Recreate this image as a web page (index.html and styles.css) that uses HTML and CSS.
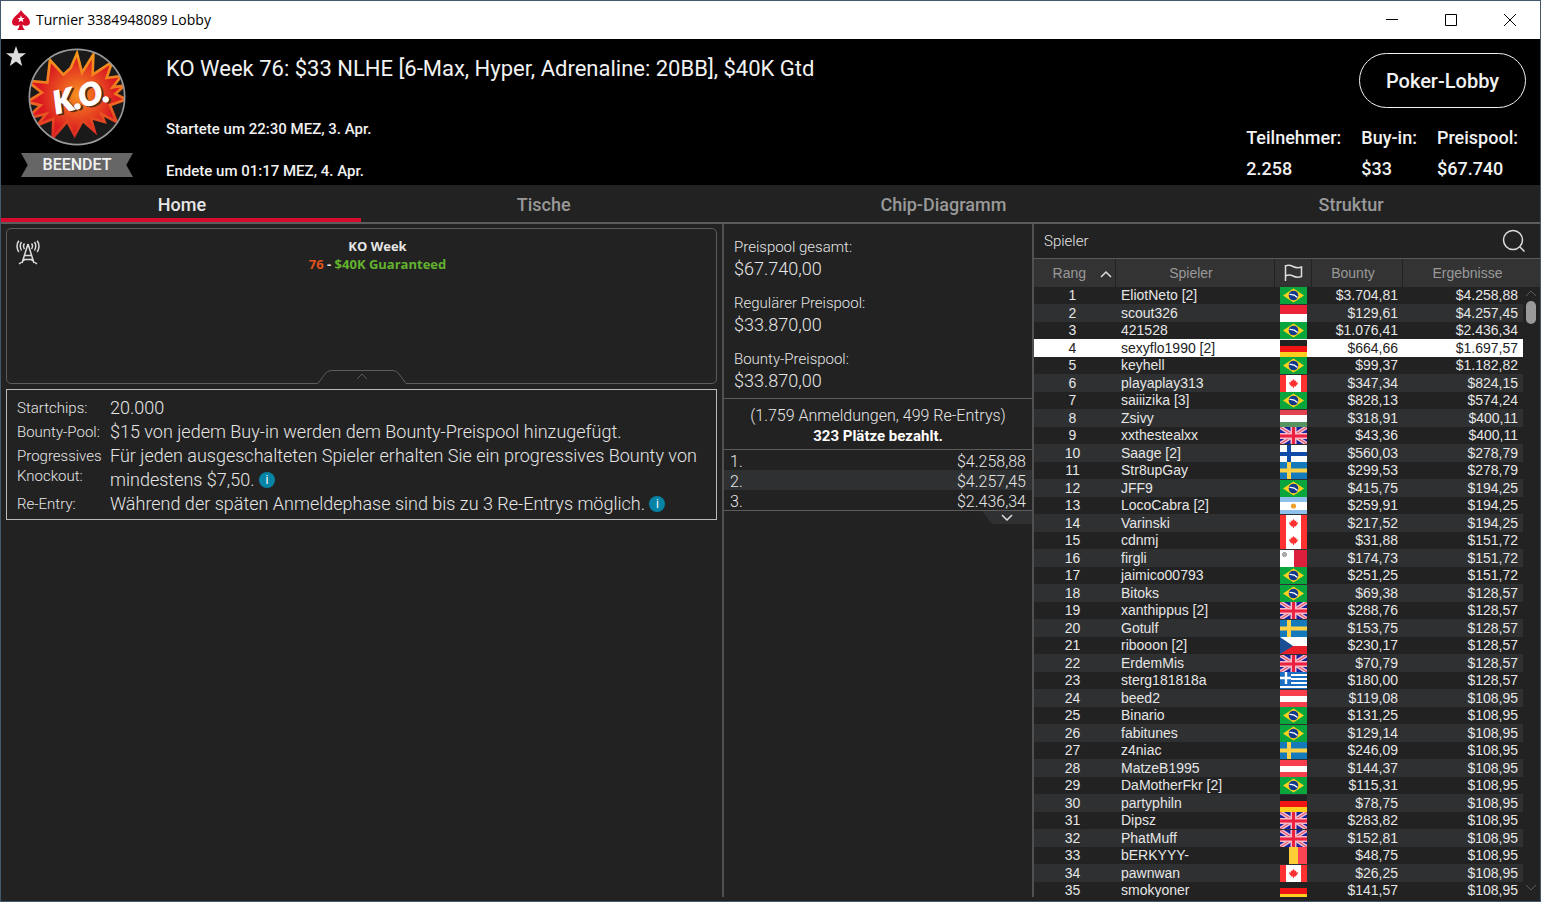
FILE: index.html
```html
<!DOCTYPE html>
<html lang="de">

<head>
  <meta charset="UTF-8">
  <meta name="viewport" content="width=device-width, initial-scale=1.0">
  <title>Turnier 3384948089 Lobby</title>
  <link rel="stylesheet" href="styles.css">
</head>

<body>
  <!-- flag sprites -->
  <svg class="sprites" aria-hidden="true">
    <symbol id="br" viewBox="0 0 27 17">
      <rect width="27" height="17" fill="#09a63d" />
      <path d="M3 8.5L13.5 1.5L24 8.5L13.5 15.500z" fill="#fbd31c" />
      <circle cx="13.5" cy="8.5" r="4.8" fill="#123a8c" />
      <path d="M9.500 7.500Q14 7 17.500 10.500" stroke="#fff" stroke-width="1.2" fill="none" />
    </symbol>
    <symbol id="id" viewBox="0 0 27 17">
      <rect width="27" height="17" fill="#fff" />
      <rect width="27" height="9" fill="#ec2237" />
    </symbol>
    <symbol id="de" viewBox="0 0 27 17">
      <rect width="27" height="17" fill="#222" />
      <rect y="6" width="27" height="6" fill="#f01414" />
      <rect y="12" width="27" height="5" fill="#ffcf1f" />
    </symbol>
    <symbol id="ca" viewBox="0 0 27 17">
      <rect width="27" height="17" fill="#ff3131" />
      <rect x="6" width="15" height="17" fill="#fff" />
      <path d="M13.500 4l1.500 2 1.300-.5-.2 2 2-.3-.7 2-1.900 2.300h-1.500v1.500h-1v-1.500h-1.500L9.600 9.200l-.7-2 2 .3-.2-2 1.300.5z" fill="#ff3131" />
    </symbol>
    <symbol id="hu" viewBox="0 0 27 17">
      <rect width="27" height="17" fill="#fff" />
      <rect width="27" height="5" fill="#e2414f" />
      <rect y="12" width="27" height="5" fill="#55935f" />
    </symbol>
    <symbol id="gb" viewBox="0 0 27 17">
      <rect width="27" height="17" fill="#1a23a0" />
      <path d="M0 0L27 17M27 0L0 17" stroke="#f3c9d4" stroke-width="4" />
      <path d="M0 0L27 17M27 0L0 17" stroke="#e8566e" stroke-width="1.2" />
      <path d="M13.500 0V17M0 9H27" stroke="#f6b9c4" stroke-width="6" />
      <path d="M13.500 0V17M0 9H27" stroke="#ea2140" stroke-width="3" />
    </symbol>
    <symbol id="fi" viewBox="0 0 27 17">
      <rect width="27" height="17" fill="#fff" />
      <path d="M9 0V17M0 9H27" stroke="#0f4aa8" stroke-width="4" />
    </symbol>
    <symbol id="se" viewBox="0 0 27 17">
      <rect width="27" height="17" fill="#147abb" />
      <path d="M9 0V17M0 8.500H27" stroke="#ffd147" stroke-width="4" />
    </symbol>
    <symbol id="ar" viewBox="0 0 27 17">
      <rect width="27" height="17" fill="#fff" />
      <rect width="27" height="5" fill="#8fbfeb" />
      <rect y="13" width="27" height="4" fill="#8fbfeb" />
      <circle cx="13.5" cy="9" r="2.6" fill="#efa02b" />
    </symbol>
    <symbol id="mt" viewBox="0 0 27 17">
      <rect width="27" height="17" fill="#fff" />
      <rect x="14" width="13" height="17" fill="#dc1f3c" />
      <path d="M2 4.500H7M4.500 2V7" stroke="#aaa" stroke-width="3" />
    </symbol>
    <symbol id="cz" viewBox="0 0 27 17">
      <rect width="27" height="17" fill="#fff" />
      <rect y="9" width="27" height="8" fill="#e8202b" />
      <path d="M0 0L13 9L0 17z" fill="#1a4f94" />
    </symbol>
    <symbol id="gr" viewBox="0 0 27 17">
      <rect width="27" height="17" fill="#1b6fc2" />
      <path d="M0 3H27M0 7H27M0 11H27M0 15H27" stroke="#fff" stroke-width="1.8" />
      <rect width="11" height="12" fill="#1b6fc2" />
      <path d="M6 0V12M0 6H11" stroke="#fff" stroke-width="2.4" />
    </symbol>
    <symbol id="at" viewBox="0 0 27 17">
      <rect width="27" height="17" fill="#fff" />
      <rect width="27" height="6" fill="#f83f4e" />
      <rect y="12" width="27" height="5" fill="#f83f4e" />
    </symbol>
    <symbol id="be" viewBox="0 0 27 17">
      <rect width="27" height="17" fill="#222" />
      <rect x="9" width="9" height="17" fill="#ffcd35" />
      <rect x="18" width="9" height="17" fill="#ff4353" />
    </symbol>
  </svg>

  <div class="window">
    <header class="titlebar">
      <svg width="18" height="20" viewBox="0 0 18 20" aria-hidden="true">
        <path d="M9 0C11 4 18 7.500 18 12.200C18 15.500 13.500 17.200 10.500 14.500C10.600 16.500 11 18 12.500 19.500V20H5.500V19.500C7 18 7.400 16.500 7.500 14.500C4.500 17.200 0 15.500 0 12.200C0 7.500 7 4 9 0z" fill="#d70a2c" />
        <path d="M9 5.200l1 2.700h2.800l-2.200 1.700.8 2.700L9 10.700l-2.400 1.600.8-2.700L5.200 7.900H8z" fill="#fff" />
      </svg>
      <h1 class="titlebar-text">Turnier 3384948089 Lobby</h1>
      <div class="window-buttons">
        <button aria-label="Minimieren"><svg width="12" height="12"><path d="M0 5.500H12" /></svg></button>
        <button aria-label="Maximieren"><svg width="12" height="12"><path d="M.5.5H11.500V11.500H.5z" /></svg></button>
        <button aria-label="Schließen"><svg width="12" height="12"><path d="M0 0L12 12M12 0L0 12" /></svg></button>
      </div>
    </header>

    <section class="hero">
      <svg class="star" width="20" height="20" viewBox="0 0 20 20" aria-hidden="true">
        <path d="M10 0l2.500 7.200H20l-6 4.600 2.200 8.200L10 15.400 3.800 20 6 11.800 0 7.200h7.500z" fill="#ddd" />
      </svg>
      <div class="badge">
        <svg width="98" height="98" viewBox="84 24 294 294" role="img" aria-label="K.O.">
          <defs>
            <radialGradient id="burst" gradientUnits="userSpaceOnUse" cx="235" cy="165" r="115">
              <stop offset="0" stop-color="#f6921e" />
              <stop offset=".45" stop-color="#ec5a20" />
              <stop offset="1" stop-color="#da1a20" />
            </radialGradient>
            <linearGradient id="edge" gradientUnits="userSpaceOnUse" x1="0" y1="30" x2="0" y2="290">
              <stop offset="0" stop-color="#f59a1c" />
              <stop offset=".6" stop-color="#ee6a20" />
              <stop offset="1" stop-color="#d92a22" />
            </linearGradient>
            <clipPath id="disc"><circle cx="231" cy="171" r="142" /></clipPath>
          </defs>
          <circle cx="231" cy="171" r="143" fill="#1a1a1a" />
          <path clip-path="url(#disc)" d="M231 40L246 98L280 44L278 104L336 66L320 114L364 108L338 142L374 136L346 162L378 178L330 196L350 246L304 222L314 246L272 234L284 274L248 242L224 286L202 244L158 294L160 236L112 256L138 222L80 236L122 196L80 186L126 158L80 122L142 128L150 60L190 104L212 84z" fill="url(#burst)" stroke="url(#edge)" stroke-width="8" />
          <circle cx="231" cy="171" r="143" fill="none" stroke="#999" stroke-width="5" />
          <g class="ko" transform="rotate(-14 240 170)">
            <text x="247" y="208" fill="#5a2a12" stroke="#5a2a12">K.O.</text>
            <text x="242" y="203" fill="#fff" stroke="#fff">K.O.</text>
          </g>
        </svg>
        <span class="ribbon">BEENDET</span>
      </div>
      <div class="event">
        <h2>KO Week 76: $33 NLHE [6-Max, Hyper, Adrenaline: 20BB], $40K Gtd</h2>
        <p>Startete um 22:30 MEZ, 3. Apr.</p>
        <p>Endete um 01:17 MEZ, 4. Apr.</p>
      </div>
      <div class="hero-side">
        <button class="lobby-button">Poker-Lobby</button>
        <dl class="stats">
          <div><dt>Teilnehmer:</dt><dd>2.258</dd></div>
          <div><dt>Buy-in:</dt><dd>$33</dd></div>
          <div><dt>Preispool:</dt><dd>$67.740</dd></div>
        </dl>
      </div>
    </section>

    <nav class="tabs">
      <a class="active" href="#home">Home</a>
      <a href="#tische">Tische</a>
      <a href="#chips">Chip-Diagramm</a>
      <a href="#struktur">Struktur</a>
    </nav>

    <main class="panels">
      <section class="overview">
        <div class="promo">
          <svg class="tower" width="24" height="25" viewBox="0 0 24 25" aria-hidden="true">
            <path d="M12 4L6 23M12 4L18 23M9 15.500H15M7.500 19.500H16.500M3 24L9 19.500M21 24L15 19.500" />
            <path d="M8.500 3.500Q6.500 6 8.500 9M15.500 3.500Q17.500 6 15.500 9M5.500 2Q3 6 5.500 10.500M18.500 2Q21 6 18.500 10.500M2.800 .8Q-.8 6 2.800 12M21.200 .8Q24.800 6 21.200 12" />
          </svg>
          <p class="promo-title">KO Week</p>
          <p class="promo-title"><span class="orange">76</span> - <span class="green">$40K Guaranteed</span></p>
          <button class="collapse" aria-label="Einklappen">
            <svg width="88" height="14" viewBox="0 0 88 14"><path d="M0 13.500L7 4Q9 .5 13 .5H75Q79 .5 81 4L88 13.500" /><path d="M39 9L44 4L49 9" /></svg>
          </button>
        </div>
        <dl class="info">
          <dt>Startchips:</dt>
          <dd>20.000</dd>
          <dt>Bounty-Pool:</dt>
          <dd>$15 von jedem Buy-in werden dem Bounty-Preispool hinzugefügt.</dd>
          <dt>Progressives Knockout:</dt>
          <dd>Für jeden ausgeschalteten Spieler erhalten Sie ein progressives Bounty von mindestens $7,50. <button class="info-icon" aria-label="Info">i</button></dd>
          <dt>Re-Entry:</dt>
          <dd>Während der späten Anmeldephase sind bis zu 3 Re-Entrys möglich. <button class="info-icon" aria-label="Info">i</button></dd>
        </dl>
      </section>

      <section class="prizes">
        <dl class="pools">
          <dt>Preispool gesamt:</dt>
          <dd>$67.740,00</dd>
          <dt>Regulärer Preispool:</dt>
          <dd>$33.870,00</dd>
          <dt>Bounty-Preispool:</dt>
          <dd>$33.870,00</dd>
        </dl>
        <div class="entries">
          <p>(1.759 Anmeldungen, 499 Re-Entrys)</p>
          <p class="paid">323 Plätze bezahlt.</p>
        </div>
        <table class="payouts">
          <tr><td>1.</td><td>$4.258,88</td></tr>
          <tr><td>2.</td><td>$4.257,45</td></tr>
          <tr><td>3.</td><td>$2.436,34</td></tr>
        </table>
        <button class="more" aria-label="Mehr anzeigen"><svg width="12" height="7"><path d="M1 1L6 6L11 1" /></svg></button>
      </section>

      <section class="players">
        <div class="players-head">
          <h3>Spieler</h3>
          <button aria-label="Suchen"><svg width="24" height="24" viewBox="0 0 24 24"><circle cx="11" cy="11" r="9.5" /><path d="M18 18L22.500 22.500" /></svg></button>
        </div>
        <div class="list">
          <table>
            <colgroup>
              <col class="col-rank">
              <col>
              <col class="col-flag">
              <col class="col-bounty">
              <col class="col-result">
              <col class="col-scroll">
            </colgroup>
            <thead>
              <tr>
                <th class="rank-head">Rang<svg width="12" height="8"><path d="M1 7L6 2L11 7" /></svg></th>
                <th>Spieler</th>
                <th class="flag-head"><svg width="19" height="18" viewBox="0 0 19 18"><path d="M1.500 1V17M1.500 2Q5 .5 9 2.500T17.500 3V12.500Q13 14 9 12T1.500 12" /></svg></th>
                <th>Bounty</th>
                <th colspan="2">Ergebnisse</th>
              </tr>
            </thead>
            <tbody id="rows"></tbody>
          </table>
          <div class="scrollbar">
            <svg width="12" height="7"><path d="M1 6L6 1L11 6" /></svg>
            <div class="thumb"></div>
            <svg width="12" height="7"><path d="M1 1L6 6L11 1" /></svg>
          </div>
        </div>
      </section>
    </main>
  </div>

  <script>
    const players = [
      ['EliotNeto [2]', 'br', '3.704,81', '4.258,88'],
      ['scout326', 'id', '129,61', '4.257,45'],
      ['421528', 'br', '1.076,41', '2.436,34'],
      ['sexyflo1990 [2]', 'de', '664,66', '1.697,57'],
      ['keyhell', 'br', '99,37', '1.182,82'],
      ['playaplay313', 'ca', '347,34', '824,15'],
      ['saiiizika [3]', 'br', '828,13', '574,24'],
      ['Zsivy', 'hu', '318,91', '400,11'],
      ['xxthestealxx', 'gb', '43,36', '400,11'],
      ['Saage [2]', 'fi', '560,03', '278,79'],
      ['Str8upGay', 'se', '299,53', '278,79'],
      ['JFF9', 'br', '415,75', '194,25'],
      ['LocoCabra [2]', 'ar', '259,91', '194,25'],
      ['Varinski', 'ca', '217,52', '194,25'],
      ['cdnmj', 'ca', '31,88', '151,72'],
      ['firgli', 'mt', '174,73', '151,72'],
      ['jaimico00793', 'br', '251,25', '151,72'],
      ['Bitoks', 'br', '69,38', '128,57'],
      ['xanthippus [2]', 'gb', '288,76', '128,57'],
      ['Gotulf', 'se', '153,75', '128,57'],
      ['ribooon [2]', 'cz', '230,17', '128,57'],
      ['ErdemMis', 'gb', '70,79', '128,57'],
      ['sterg181818a', 'gr', '180,00', '128,57'],
      ['beed2', 'at', '119,08', '108,95'],
      ['Binario', 'br', '131,25', '108,95'],
      ['fabitunes', 'br', '129,14', '108,95'],
      ['z4niac', 'se', '246,09', '108,95'],
      ['MatzeB1995', 'at', '144,37', '108,95'],
      ['DaMotherFkr [2]', 'br', '115,31', '108,95'],
      ['partyphiln', 'de', '78,75', '108,95'],
      ['Dipsz', 'gb', '283,82', '108,95'],
      ['PhatMuff', 'gb', '152,81', '108,95'],
      ['bERKYYY-', 'be', '48,75', '108,95'],
      ['pawnwan', 'ca', '26,25', '108,95'],
      ['smokyoner', 'de', '141,57', '108,95']
    ];
    const ownRank = 4;

    document.getElementById('rows').innerHTML = players.map(([name, flag, bounty, result], i) => `
      <tr${i + 1 === ownRank ? ' class="own"' : ''}>
        <td class="rank">${i + 1}</td>
        <td>${name}</td>
        <td class="flag"><svg width="27" height="17"><use href="#${flag}" /></svg></td>
        <td class="money">$${bounty}</td>
        <td class="money">$${result}</td>
      </tr>`).join('');
  </script>
</body>

</html>
```
FILE: styles.css
```css
* {
  box-sizing: border-box;
}

body {
  margin: 0;
  background-color: #222;
  color: #e6e6e6;
  font-family: Roboto, sans-serif;
}

h1, h2, h3, p, dl, dd {
  margin: 0;
}

button {
  padding: 0;
  border: none;
  background: none;
  color: inherit;
  font-family: inherit;
  cursor: pointer;
}

svg {
  display: block;
}

.sprites {
  position: absolute;
  width: 0;
  height: 0;
}

.window {
  display: flex;
  flex-direction: column;
  height: 100vh;
  border: 1px solid #44586b;
}

/* title bar */
.titlebar {
  display: flex;
  align-items: center;
  flex: none;
  height: 38px;
  padding: 0 1px 0 11px;
  background-color: #fff;
  color: #000;
}

.titlebar-text {
  padding-bottom: 2px;
  margin-left: 6px;
  font-family: "Open Sans", sans-serif;
  font-size: 14px;
  font-weight: 400;
}

.window-buttons {
  display: flex;
  margin-left: auto;
}

.window-buttons button {
  display: grid;
  place-items: center;
  width: 59px;
  height: 38px;
}

.window-buttons path {
  fill: none;
  stroke: #000;
}

/* header */
.hero {
  position: relative;
  display: flex;
  flex: none;
  height: 146px;
  padding: 0 14px 0 20px;
  background-color: #000;
  color: #f2f2f2;
}

.star {
  position: absolute;
  left: 5px;
  top: 7px;
}

.badge {
  display: flex;
  flex-direction: column;
  align-items: center;
  width: 112px;
  padding-top: 9px;
}

.ko text {
  font-family: Lato, sans-serif;
  font-size: 92px;
  font-style: italic;
  font-weight: 900;
  stroke-width: 4px;
  text-anchor: middle;
}

.ribbon {
  width: 112px;
  margin-top: 7px;
  background-color: #666;
  clip-path: polygon(0 0, 100% 0, 94% 50%, 100% 100%, 0 100%, 6% 50%);
  font-size: 16px;
  font-weight: 500;
  line-height: 24px;
  text-align: center;
}

.event {
  flex: 1;
  padding: 16px 0 0 33px;
}

.event h2 {
  margin-bottom: 35px;
  font-size: 22px;
  font-weight: 400;
  line-height: 28px;
}

.event p {
  margin-bottom: 20px;
  font-size: 15px;
  font-weight: 500;
  line-height: 22px;
}

.hero-side {
  display: flex;
  flex-direction: column;
  align-items: flex-end;
  padding-top: 14px;
}

.lobby-button {
  width: 167px;
  height: 55px;
  border: 1px solid #f2f2f2;
  border-radius: 28px;
  font-size: 20px;
  font-weight: 500;
}

.stats {
  display: flex;
  gap: 20px;
  margin: 14px 8px 0 0;
  font-size: 18px;
  font-weight: 500;
  line-height: 31px;
}

/* tabs */
.tabs {
  display: grid;
  grid-template-columns: 90fr 91fr 109fr 95fr;
  flex: none;
  height: 39px;
  border-bottom: 2px solid #5c5c5c;
}

.tabs a {
  height: 37px;
  padding-left: 2px;
  color: #999;
  font-size: 18px;
  font-weight: 500;
  line-height: 39px;
  text-align: center;
  text-decoration: none;
}

.tabs .active {
  border-bottom: 4px solid #d70a2c;
  color: #e6e6e6;
}

.panels {
  display: grid;
  grid-template-columns: 721fr 310fr 508fr;
  flex: 1;
  min-height: 0;
  padding-bottom: 4px;
}

/* left panel */
.overview {
  padding: 4px 5px;
}

.promo {
  position: relative;
  height: 156px;
  padding: 8px 0 0 32px;
  border: 1px solid #5c5c5c;
  border-radius: 5px;
}

.tower {
  position: absolute;
  left: 9px;
  top: 11px;
  fill: none;
  stroke: #ddd;
  stroke-width: 1.5;
}

.promo-title {
  font-family: "Open Sans", sans-serif;
  font-size: 13px;
  font-weight: 700;
  line-height: 18px;
  text-align: center;
}

.orange {
  color: #e0531f;
}

.green {
  color: #62b22f;
}

.collapse {
  position: absolute;
  left: 50%;
  bottom: -1px;
  margin-left: -44px;
  background-color: #222;
}

.collapse path {
  fill: none;
  stroke: #5c5c5c;
}

.info {
  display: grid;
  grid-template-columns: 93px 1fr;
  margin-top: 5px;
  padding: 6px 10px 3px;
  border: 1px solid #bbb;
  font-size: 18px;
  font-weight: 300;
  line-height: 24px;
}

.info dt {
  padding-top: 2px;
  font-size: 15px;
  line-height: 20px;
}

.info-icon {
  width: 16px;
  height: 16px;
  border-radius: 50%;
  background-color: #0783a5;
  color: #fff;
  font-size: 12px;
  line-height: 16px;
  vertical-align: 2px;
}

/* prize pool */
.prizes {
  border-left: 2px solid #505050;
}

.pools {
  padding: 12px 10px 0;
  border-bottom: 1px solid #5c5c5c;
  font-weight: 300;
  line-height: 22px;
}

.pools dt {
  font-size: 15px;
}

.pools dd {
  margin-bottom: 12px;
  font-size: 18px;
}

.pools dd:last-child {
  margin-bottom: 6px;
}

.entries {
  padding: 7px 0 3px;
  border-bottom: 1px solid #5c5c5c;
  font-size: 16px;
  font-weight: 300;
  line-height: 20px;
  text-align: center;
}

.entries .paid {
  color: #fff;
  font-size: 15px;
  font-weight: 700;
}

.payouts {
  width: 100%;
  border-bottom: 1px solid #5c5c5c;
  border-spacing: 0;
  font-size: 16px;
  font-weight: 300;
  line-height: 17px;
}

.payouts td {
  padding: 3px 6px 0;
}

.payouts td:last-child {
  text-align: right;
}

.payouts tr:nth-child(even) {
  background-color: #2e3032;
}

.more {
  display: grid;
  place-items: center;
  width: 50px;
  height: 13px;
  margin-left: auto;
  background-color: #2e3032;
  clip-path: polygon(0 0, 100% 0, 100% 100%, 20% 100%);
}

.more path,
.rank-head path,
.flag-head path,
.players-head svg {
  fill: none;
  stroke: #ddd;
  stroke-width: 1.5;
}

/* player list */
.players {
  display: flex;
  flex-direction: column;
  min-height: 0;
  border-left: 2px solid #505050;
}

.players-head {
  display: flex;
  justify-content: space-between;
  align-items: center;
  flex: none;
  height: 35px;
  padding: 0 14px 0 10px;
  border-bottom: 1px solid #5c5c5c;
}

.players-head h3 {
  font-size: 15px;
  font-weight: 300;
}

.list {
  position: relative;
  flex: 1;
  min-height: 0;
  overflow: hidden;
  font-family: "Liberation Sans", sans-serif;
  font-size: 14px;
}

.list table {
  width: 100%;
  border-spacing: 0;
  table-layout: fixed;
}

.col-rank {
  width: 82px;
}

.col-flag {
  width: 37px;
}

.col-bounty {
  width: 91px;
}

.col-result {
  width: 120px;
}

.col-scroll {
  width: 17px;
}

.list th {
  height: 28px;
  padding: 0 8px 0 0;
  border-right: 1px solid #222;
  background-color: #333;
  color: #999;
  font-weight: 400;
}

.list th:last-child {
  border-right: none;
}

.list .rank-head {
  padding-right: 3px;
  text-align: right;
}

.rank-head svg {
  display: inline-block;
  margin-left: 14px;
}

.list .flag-head {
  padding: 0 0 0 9px;
}

.list td {
  height: 17px;
  padding: 0 0 0 5px;
  line-height: 17px;
}

.list tr:nth-child(even) td {
  height: 18px;
  background-color: #2e3032;
}

.list tr.own td {
  background-color: #fff;
  color: #222;
}

.list .rank {
  padding: 0 5px 0 0;
  text-align: center;
}

.list .money {
  padding: 0 5px 0 0;
  text-align: right;
}

.scrollbar {
  position: absolute;
  top: 31px;
  right: 2px;
  bottom: 6px;
  display: flex;
  flex-direction: column;
  align-items: center;
  gap: 4px;
  width: 14px;
}

.scrollbar path {
  fill: none;
  stroke: #5c5c5c;
}

.scrollbar svg:last-child {
  margin-top: auto;
}

.thumb {
  width: 10px;
  height: 23px;
  border-radius: 5px;
  background-color: #999;
}
```
